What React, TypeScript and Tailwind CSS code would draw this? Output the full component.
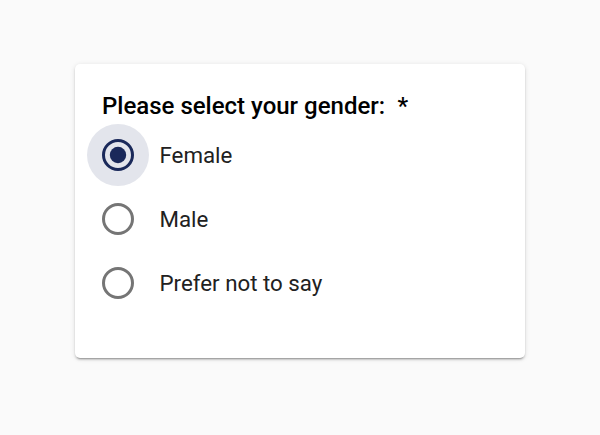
import React, { useState } from "react";

const options = ["Female", "Male", "Prefer not to say"];

function RadioIcon({ checked }: { checked: boolean }) {
  return (
    <svg width="32" height="32" viewBox="0 0 32 32" aria-hidden="true">
      <circle
        cx="16"
        cy="16"
        r="14.5"
        fill="none"
        stroke={checked ? "#1a295a" : "#757575"}
        strokeWidth="3"
      />
      {checked && <circle cx="16" cy="16" r="8.2" fill="#1a295a" />}
    </svg>
  );
}

export default function App() {
  const [value, setValue] = useState("Female");
  return (
    <div
      className="min-h-[435px] w-full bg-[#fafafa] pt-[64px]"
      style={{ fontFamily: "Roboto, 'Liberation Sans', sans-serif" }}
    >
      <div className="mx-auto flex h-[294px] w-[450px] flex-col rounded-[5px] bg-white px-[27px] pt-[27.5px] shadow-[0_3px_1px_-2px_rgba(0,0,0,0.2),0_2px_2px_0_rgba(0,0,0,0.14),0_1px_5px_0_rgba(0,0,0,0.12)]">
        <div className="h-[28px] whitespace-nowrap text-[24px] font-medium leading-[28px] text-black">
          Please select your gender:<span className="ml-[12.5px]">*</span>
        </div>
        <div className="mt-[3.5px] flex flex-col" role="radiogroup">
          {options.map((opt) => {
            const checked = value === opt;
            return (
              <label
                key={opt}
                className="flex h-[64px] cursor-pointer items-center"
                onClick={() => setValue(opt)}
              >
                <span
                  className={`-ml-[15px] flex h-[62px] w-[62px] items-center justify-center rounded-full ${
                    checked ? "bg-[#e3e5ec]" : ""
                  }`}
                >
                  <RadioIcon checked={checked} />
                </span>
                <span className="ml-[10.5px] text-[22.3px] leading-[28px] text-[#212121]">
                  {opt}
                </span>
              </label>
            );
          })}
        </div>
      </div>
    </div>
  );
}
